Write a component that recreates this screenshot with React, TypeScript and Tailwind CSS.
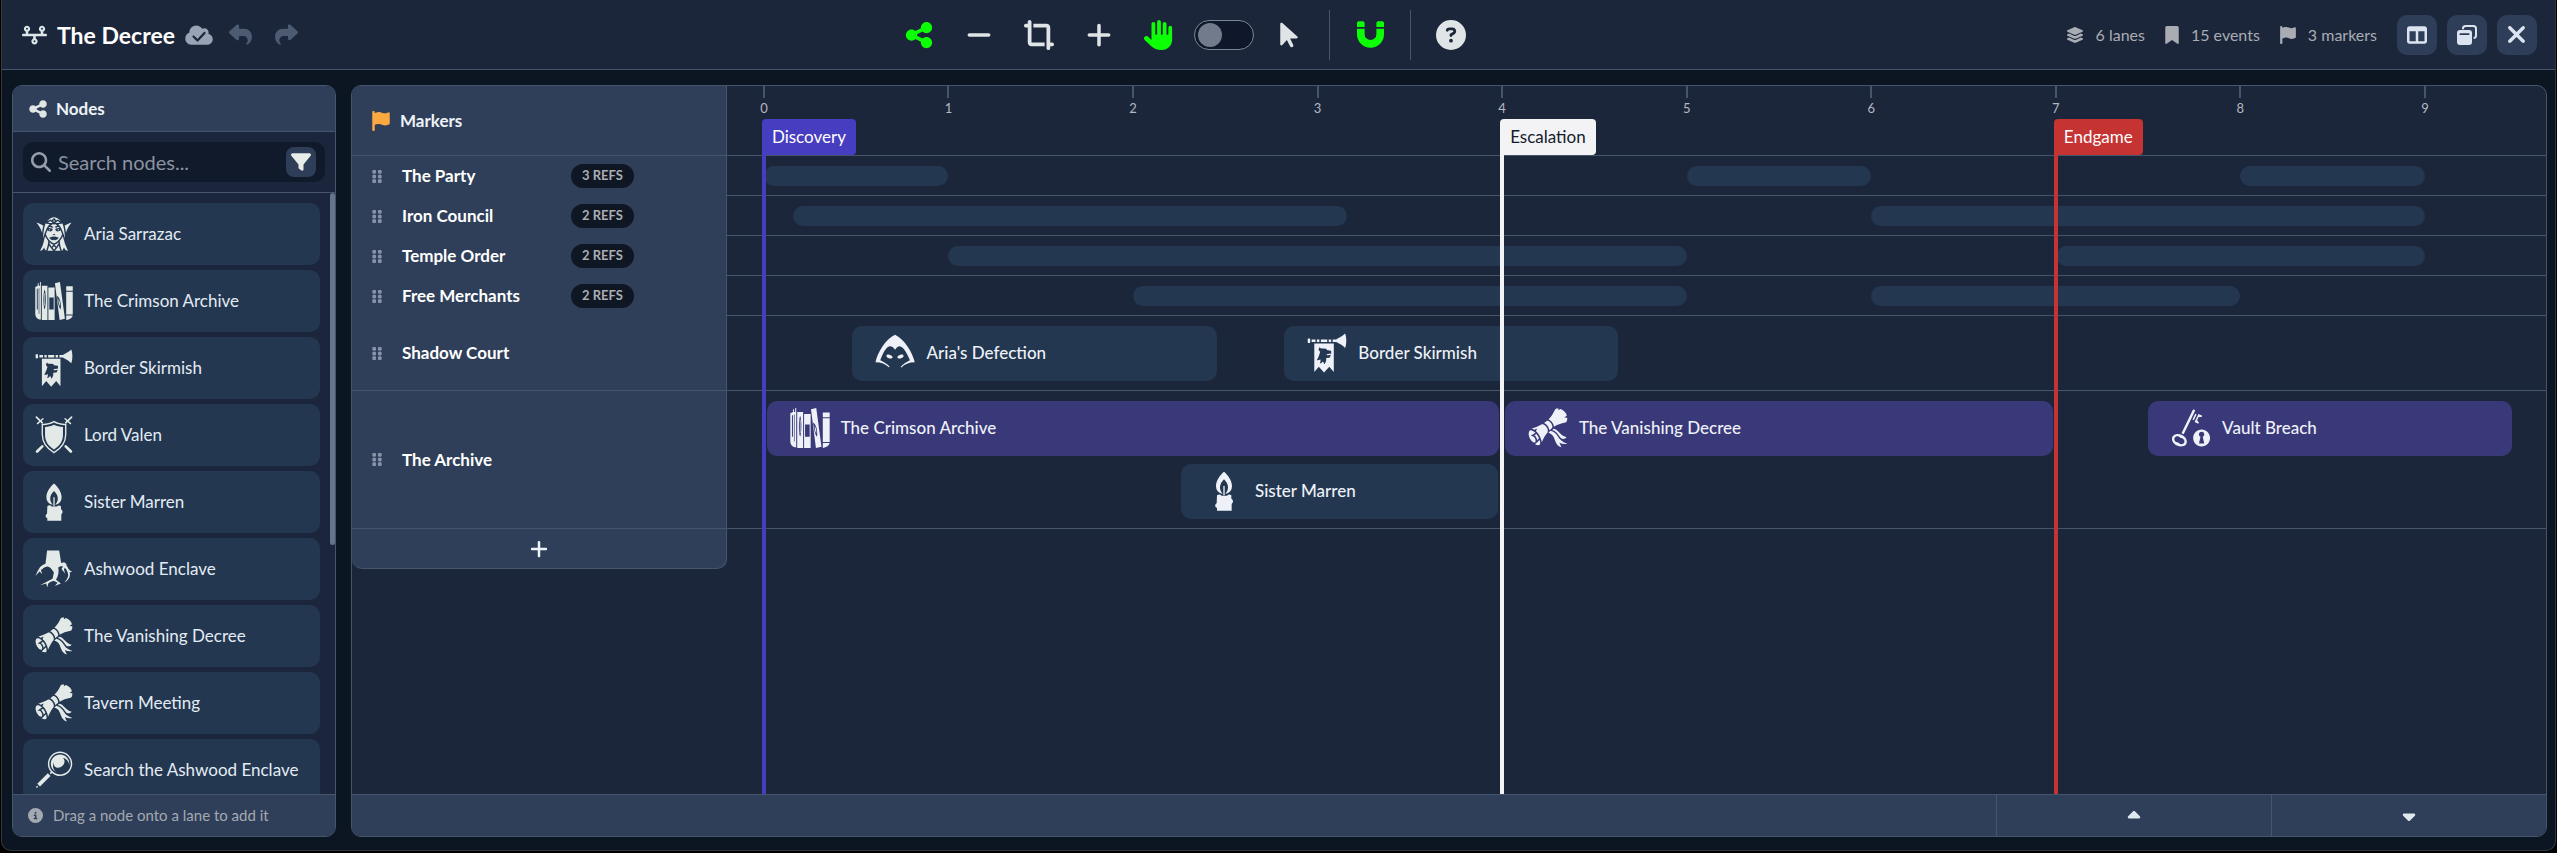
import React, { useState } from "react";
import {
  FaArrowPointer,
  FaBookmark,
  FaCaretDown,
  FaCaretUp,
  FaCircleInfo,
  FaCircleQuestion,
  FaCloud,
  FaCropSimple,
  FaFilter,
  FaFlag,
  FaGripVertical,
  FaLayerGroup,
  FaMagnifyingGlass,
  FaMinus,
  FaPlus,
  FaReply,
  FaShare,
  FaShareNodes,
  FaTableColumns,
  FaTimeline,
  FaXmark,
  FaHand,
} from "react-icons/fa6";
import {
  GiHood,
  GiKeyLock,
  GiMagnifyingGlass,
  GiTiedScroll,
  GiTreeRoots,
  GiTrumpetFlag,
  GiWomanElfFace,
} from "react-icons/gi";

type NodeIcon = React.ComponentType<{ className?: string }>;

type LaneEvent = {
  label: string;
  icon: NodeIcon;
  start: number;
  end: number;
  purple?: boolean;
};

type Lane = {
  name: string;
  refs?: [number, number][]; // thin bars, one per reference
  rows?: LaneEvent[][];
};

const BooksIcon: NodeIcon = ({ className }) => (
  <svg viewBox="-3 -3 126 128" className={className} fill="currentColor" fillRule="evenodd">
    <path d="M0 16L8 12V4h3v8h4V0h3v120h-5Q2 117 0 104zM5 22v66h3V22zM11 20v82h2V20z" />
    <path d="M21 12h18v110H21zM30 24c-5 12-5 52 0 64 5-12 5-52 0-64zm-1 12h2v40h-2z" />
    <path d="M42 18h20v104H42zM45 50v38h14V50z" />
    <path d="M63 4L79 0l16 118-17 4zM69 44l3 18c2 14 6 22 9 26l1-6c1-16-4-34-13-38zm5 10c5 8 6 16 5 24-3-6-5-14-5-24z" />
    <path d="M99 14h21v14H99zM99 31h21v73H99zM99 107h21q-3 12-21 15z" />
  </svg>
);

const ShieldIcon: NodeIcon = ({ className }) => (
  <svg viewBox="-3 -3 114 116" className={className} fill="currentColor">
    {/* swords */}
    <g stroke="currentColor" strokeLinecap="round" fill="none">
      <path d="M3 3l17 17M105 3L88 20" strokeWidth="5" />
      <path d="M6 22L22 8M102 22L86 8" strokeWidth="4" />
      <path d="M5 103l15-15M103 103L88 88" strokeWidth="8" />
    </g>
    {/* shield */}
    <path
      d="M54 16c10 6 22 8 34 9v28c0 24-13 41-34 53C33 94 20 77 20 53V25c12-1 24-3 34-9z"
      fill="none"
      stroke="currentColor"
      strokeWidth="4"
    />
    <path d="M54 25c8 4 17 6 26 7v22c0 19-9 32-26 43-17-11-26-24-26-43V32c9-1 18-3 26-7z" />
  </svg>
);

const CandleIcon: NodeIcon = ({ className }) => (
  <svg viewBox="0 0 126 126" className={className} fill="currentColor" fillRule="evenodd">
    <path d="M63 5c12 10 24 27 24 43 0 12-6 19-14 22l-6 2c5-6 8-13 8-20 0-10-6-18-12-24-6 6-12 14-12 24 0 7 3 14 8 20l-6-2c-8-3-14-10-14-22C39 32 51 15 63 5z" />
    <path d="M61 48h4v28h-4z" />
    <path d="M42 76c6-4 10-3 14 1h16c4-4 8-4 13-1v10c7 4 6 12 1 16v20H42v-8c-7-3-7-10-1-14z" />
  </svg>
);

const nodes: { label: string; icon: NodeIcon }[] = [
  { label: "Aria Sarrazac", icon: GiWomanElfFace },
  { label: "The Crimson Archive", icon: BooksIcon },
  { label: "Border Skirmish", icon: GiTrumpetFlag },
  { label: "Lord Valen", icon: ShieldIcon },
  { label: "Sister Marren", icon: CandleIcon },
  { label: "Ashwood Enclave", icon: GiTreeRoots },
  { label: "The Vanishing Decree", icon: GiTiedScroll },
  { label: "Tavern Meeting", icon: GiTiedScroll },
  { label: "Search the Ashwood Enclave", icon: GiMagnifyingGlass },
];

const lanes: Lane[] = [
  { name: "The Party", refs: [[0, 1], [5, 6], [8, 9]] },
  { name: "Iron Council", refs: [[0.16, 3.16], [6, 9]] },
  { name: "Temple Order", refs: [[1, 5], [7, 9]] },
  { name: "Free Merchants", refs: [[2, 5], [6, 8]] },
  {
    name: "Shadow Court",
    rows: [
      [
        { label: "Aria's Defection", icon: GiHood, start: 0.48, end: 2.455 },
        { label: "Border Skirmish", icon: GiTrumpetFlag, start: 2.82, end: 4.63 },
      ],
    ],
  },
  {
    name: "The Archive",
    rows: [
      [
        { label: "The Crimson Archive", icon: BooksIcon, start: 0.015, end: 3.985, purple: true },
        { label: "The Vanishing Decree", icon: GiTiedScroll, start: 4.015, end: 6.985, purple: true },
        { label: "Vault Breach", icon: GiKeyLock, start: 7.5, end: 9.47, purple: true },
      ],
      [{ label: "Sister Marren", icon: CandleIcon, start: 2.26, end: 3.98 }],
    ],
  },
];

const markers = [
  { label: "Discovery", at: 0, flag: "bg-[#473dc0] text-white", line: "bg-[#473dc0]" },
  { label: "Escalation", at: 4, flag: "bg-[#f3f3f5] text-[#141c2c]", line: "bg-[#f3f3f5]" },
  { label: "Endgame", at: 7, flag: "bg-[#c53333] text-white", line: "bg-[#c53333]" },
];

const ORIGIN = 0.2; // empty space before 0
const SPAN = 9.856; // visible time units

const pos = (t: number) => `${((t + ORIGIN) / SPAN) * 100}%`;
const len = (a: number, b: number) => `${((b - a) / SPAN) * 100}%`;

const ToolButton = ({
  label,
  active,
  children,
}: {
  label: string;
  active?: boolean;
  children: React.ReactNode;
}) => (
  <button
    type="button"
    aria-label={label}
    className={`flex h-10 w-[60px] items-center justify-center ${
      active ? "text-[#0cff04]" : "text-[#dfe4e6]"
    }`}
  >
    {children}
  </button>
);

const WindowButton = ({ label, children }: { label: string; children: React.ReactNode }) => (
  <button
    type="button"
    aria-label={label}
    className="flex size-10 items-center justify-center rounded-[10px] bg-[#2f3e58] text-[#dbe4f0]"
  >
    {children}
  </button>
);

const CloudCheck = () => (
  <span className="relative flex">
    <FaCloud className="h-[22px] w-7 text-[#99a3b5]" />
    <svg viewBox="0 0 28 22" className="absolute inset-0 h-[22px] w-7" fill="none">
      <path d="M8.5 12.5l4 4 7-7.5" stroke="#1c263a" strokeWidth="2.2" strokeLinecap="round" strokeLinejoin="round" />
    </svg>
  </span>
);

const MagnetIcon = () => (
  <svg viewBox="0 0 27 27" className="size-[27px]" fill="currentColor">
    <path d="M0 6V2a1.8 1.8 0 0 1 1.8-1.8h4A1.8 1.8 0 0 1 7.6 2v4zM19.4 6V2a1.8 1.8 0 0 1 1.8-1.8h4A1.8 1.8 0 0 1 27 2v4z" />
    <path d="M0 7.8h7.6v5.4a5.9 5.9 0 0 0 11.8 0V7.8H27v5.4a13.5 13.5 0 0 1-27 0z" />
  </svg>
);

const RestoreIcon = () => (
  <svg viewBox="0 0 20 20" className="size-5" fill="none">
    <path d="M6 4.2V3.6A2.6 2.6 0 0 1 8.6 1h7.8A2.6 2.6 0 0 1 19 3.6v6.8a2.6 2.6 0 0 1-2.4 2.6" stroke="currentColor" strokeWidth="2" />
    <rect x="0" y="5" width="15" height="15" rx="3" fill="currentColor" />
    <path d="M3.4 9.2h8.2" stroke="#2f3e58" strokeWidth="1.8" strokeLinecap="round" />
  </svg>
);

const TopBar = () => {
  const [selecting, setSelecting] = useState(false);

  return (
    <header className="flex h-[70px] shrink-0 items-center justify-between border-b border-slate-600 bg-[#1c263a] pr-[18px] pl-5">
      {/* Title */}
      <div className="flex items-center">
        <FaTimeline className="h-5 w-[25px] text-[#dfe6ea]" />
        <h1 className="ml-[10px] text-[23px] leading-8 font-bold text-white">The Decree</h1>
        <div className="ml-[10px] flex items-center gap-[10px]">
          <CloudCheck />
          <button type="button" aria-label="Undo" className="flex w-9 justify-center text-[#4c5a72]">
            <FaReply className="size-[23px]" />
          </button>
          <button type="button" aria-label="Redo" className="flex w-9 justify-center text-[#4c5a72]">
            <FaShare className="size-[23px]" />
          </button>
        </div>
      </div>

      {/* Tools */}
      <div className="flex items-center">
        <ToolButton label="Nodes" active>
          <FaShareNodes className="size-[30px]" />
        </ToolButton>
        <ToolButton label="Zoom out">
          <FaMinus className="size-7" />
        </ToolButton>
        <ToolButton label="Fit to view">
          <FaCropSimple className="size-[30px]" />
        </ToolButton>
        <ToolButton label="Zoom in">
          <FaPlus className="size-7" />
        </ToolButton>
        <ToolButton label="Pan" active>
          <FaHand className="size-[30px]" />
        </ToolButton>
        <label className="relative mx-[5px] flex h-[30px] w-[60px] cursor-pointer items-center rounded-full border border-[#7b8595] bg-[#0f182a] px-[3px]">
          <input
            type="checkbox"
            aria-label="Select mode"
            checked={selecting}
            onChange={() => setSelecting(!selecting)}
            className="peer absolute inset-0 cursor-pointer opacity-0"
          />
          <span className="size-6 rounded-full bg-[#727b8b] peer-checked:ml-auto" />
        </label>
        <ToolButton label="Select">
          <FaArrowPointer className="size-7" />
        </ToolButton>
        <div className="mx-[10px] h-[50px] w-px bg-slate-600" />
        <ToolButton label="Snap" active>
          <MagnetIcon />
        </ToolButton>
        <div className="mx-[10px] h-[50px] w-px bg-slate-600" />
        <ToolButton label="Help">
          <FaCircleQuestion className="size-[30px]" />
        </ToolButton>
      </div>

      {/* Stats and window buttons */}
      <div className="flex items-center gap-5 text-base text-[#a9acb3]">
        <span className="flex items-center gap-3">
          <FaLayerGroup className="size-[18px]" />6 lanes
        </span>
        <span className="flex items-center gap-3">
          <FaBookmark className="h-[18px] w-[14px]" />
          15 events
        </span>
        <span className="flex items-center gap-3">
          <FaFlag className="h-[18px] w-4" />3 markers
        </span>
        <div className="flex gap-[10px]">
          <WindowButton label="Split view">
            <FaTableColumns className="size-5" />
          </WindowButton>
          <WindowButton label="Restore window">
            <RestoreIcon />
          </WindowButton>
          <WindowButton label="Close">
            <FaXmark className="size-[27px]" />
          </WindowButton>
        </div>
      </div>
    </header>
  );
};

const NodesPanel = () => {
  const [search, setSearch] = useState("");

  return (
    <aside className="flex w-[324px] shrink-0 flex-col overflow-hidden rounded-[10px] border border-slate-600 bg-[#1b263c]">
      <div className="flex h-[46px] shrink-0 items-center gap-2 border-b border-slate-600 bg-[#303f59] px-[15px]">
        <FaShareNodes className="size-5 text-[#dfe6e4]" />
        <h2 className="text-[17px] leading-6 font-bold text-[#eef3f8]">Nodes</h2>
      </div>

      <div className="shrink-0 border-b border-slate-600 p-[10px]">
        <div className="flex h-10 items-center rounded-[10px] bg-[#101a2b] pr-[9px] pl-2">
          <FaMagnifyingGlass className="size-5 text-[#959da9]" />
          <input
            type="text"
            aria-label="Search nodes"
            placeholder="Search nodes..."
            value={search}
            onChange={(e) => setSearch(e.target.value)}
            className="ml-[7px] min-w-0 flex-1 bg-transparent text-[20px] text-white outline-none placeholder:text-[#8b93a1]"
          />
          <button
            type="button"
            aria-label="Filter"
            className="flex size-[30px] items-center justify-center rounded-lg bg-[#2f3e58] text-[#e6ece8]"
          >
            <FaFilter className="size-5" />
          </button>
        </div>
      </div>

      <div className="flex min-h-0 flex-1 justify-between">
        <ul className="flex flex-1 flex-col gap-[5px] overflow-hidden px-[10px] pt-[10px]">
          {nodes.map(({ label, icon: Icon }) => (
            <li
              key={label}
              className="flex h-[62px] shrink-0 items-center gap-[10px] rounded-[10px] bg-[#233750] px-[11px] text-[17px] whitespace-nowrap text-[#e3ecf4]"
            >
              <Icon className="size-10 shrink-0 text-[#e2e9e7]" />
              {label}
            </li>
          ))}
        </ul>
        <div className="h-[352px] w-[5px] rounded-full bg-[#64748b]" />
      </div>

      <div className="flex h-[42px] shrink-0 items-center gap-[10px] border-t border-slate-600 bg-[#303f59] px-[15px] text-[15px] text-[#a3a9b1]">
        <FaCircleInfo className="size-[15px]" />
        Drag a node onto a lane to add it
      </div>
    </aside>
  );
};

const LaneHeader = ({ lane }: { lane: Lane }) => (
  <div className="flex items-center">
    <FaGripVertical className="h-[15px] w-[10px] text-[#8793a8]" />
    <span className="ml-5 w-[169px] text-[17px] font-bold text-white">{lane.name}</span>
    {lane.refs && (
      <span className="flex h-6 w-[63px] items-center justify-center rounded-full bg-[#0f1624] text-[13px] font-bold text-[#acaeb2]">
        {lane.refs.length} REFS
      </span>
    )}
  </div>
);

const EventCard = ({ event }: { event: LaneEvent }) => {
  const Icon = event.icon;
  return (
    <div
      className={`absolute inset-y-0 flex items-center gap-[10px] overflow-hidden rounded-[10px] pl-[22px] text-[17px] font-medium whitespace-nowrap text-[#eef2f8] ${
        event.purple ? "bg-[#393878]" : "bg-[#233750]"
      }`}
      style={{ left: pos(event.start), width: len(event.start, event.end) }}
    >
      <Icon className="size-[42px] shrink-0" />
      {event.label}
    </div>
  );
};

const laneHeight = (lane: Lane) =>
  lane.refs ? "h-10" : lane.rows?.length === 1 ? "h-[75px]" : "h-[138px]";

const Timeline = () => (
  <main className="flex min-w-0 flex-1 flex-col overflow-hidden rounded-[10px] border border-slate-600 bg-[#1c263a]">
    <div className="flex min-h-0 flex-1">
      {/* Lane names */}
      <div className="flex w-[375px] shrink-0 flex-col self-start rounded-b-[10px] border-r border-b border-slate-600 bg-[#303f59]">
        <div className="flex h-[70px] items-center gap-[10px] border-b border-slate-600 px-5">
          <FaFlag className="h-5 w-[18px] text-[#fba742]" />
          <h2 className="text-[17px] leading-6 font-bold text-[#eef3f8]">Markers</h2>
        </div>
        {lanes.map((lane, idx) => (
          <div
            key={lane.name}
            className={`flex items-center px-5 ${laneHeight(lane)} ${
              idx >= 4 ? "border-b border-slate-600" : ""
            }`}
          >
            <LaneHeader lane={lane} />
          </div>
        ))}
        <button type="button" aria-label="Add lane" className="flex h-[39px] items-center justify-center text-[#eef3f8]">
          <FaPlus className="size-5" />
        </button>
      </div>

      {/* Canvas */}
      <div className="relative min-w-0 flex-1">
        <div className="relative h-[70px] border-b border-slate-600">
          {Array.from({ length: 10 }, (_, t) => (
            <div
              key={t}
              className="absolute top-0 flex w-6 -translate-x-1/2 flex-col items-center text-[13px] leading-4 text-[#b4b8c0]"
              style={{ left: pos(t) }}
            >
              <span className="mb-[2px] h-3 w-[2px] bg-slate-600" />
              {t}
            </div>
          ))}
        </div>

        {lanes.map((lane) => (
          <div
            key={lane.name}
            className={`flex flex-col justify-center gap-2 border-b border-slate-600 ${laneHeight(lane)}`}
          >
            {lane.refs && (
              <div className="relative h-5">
                {lane.refs.map(([a, b]) => (
                  <div
                    key={a}
                    className="absolute inset-y-0 rounded-full bg-[#233750]"
                    style={{ left: pos(a), width: len(a, b) }}
                  />
                ))}
              </div>
            )}
            {lane.rows?.map((row, idx) => (
              <div key={idx} className="relative h-[55px]">
                {row.map((event) => (
                  <EventCard key={event.label} event={event} />
                ))}
              </div>
            ))}
          </div>
        ))}

        {/* Marker flags and their lines, drawn over the lanes */}
        {markers.map((m) => (
          <div key={m.label} className="absolute top-[33px] bottom-0 -ml-[2px] flex flex-col items-start" style={{ left: pos(m.at) }}>
            <span className={`flex h-9 items-center rounded-t-[4px] rounded-br-[4px] px-[10px] text-[17px] ${m.flag}`}>
              {m.label}
            </span>
            <span className={`w-1 flex-1 ${m.line}`} />
          </div>
        ))}
      </div>
    </div>

    <div className="flex h-[42px] shrink-0 justify-end border-t border-slate-600 bg-[#303f59] text-[#dfe8ec]">
      <button type="button" aria-label="Collapse" className="flex w-[275px] items-center justify-center border-l border-slate-600">
        <FaCaretUp className="size-5" />
      </button>
      <button type="button" aria-label="Expand" className="flex w-[275px] items-center justify-center border-l border-slate-600">
        <FaCaretDown className="size-5" />
      </button>
    </div>
  </main>
);

const App = () => (
  <div className="h-screen bg-black pr-px pb-[2px] pl-px font-['Lato',sans-serif]">
    <div className="flex h-full flex-col overflow-hidden rounded-b-[10px] border-r border-b border-l border-[#35373d] bg-[#0c1522]">
      <TopBar />
      <div className="flex min-h-0 flex-1 gap-[15px] pt-[15px] pr-2 pb-[13px] pl-[10px]">
        <NodesPanel />
        <Timeline />
      </div>
    </div>
  </div>
);

export default App;
